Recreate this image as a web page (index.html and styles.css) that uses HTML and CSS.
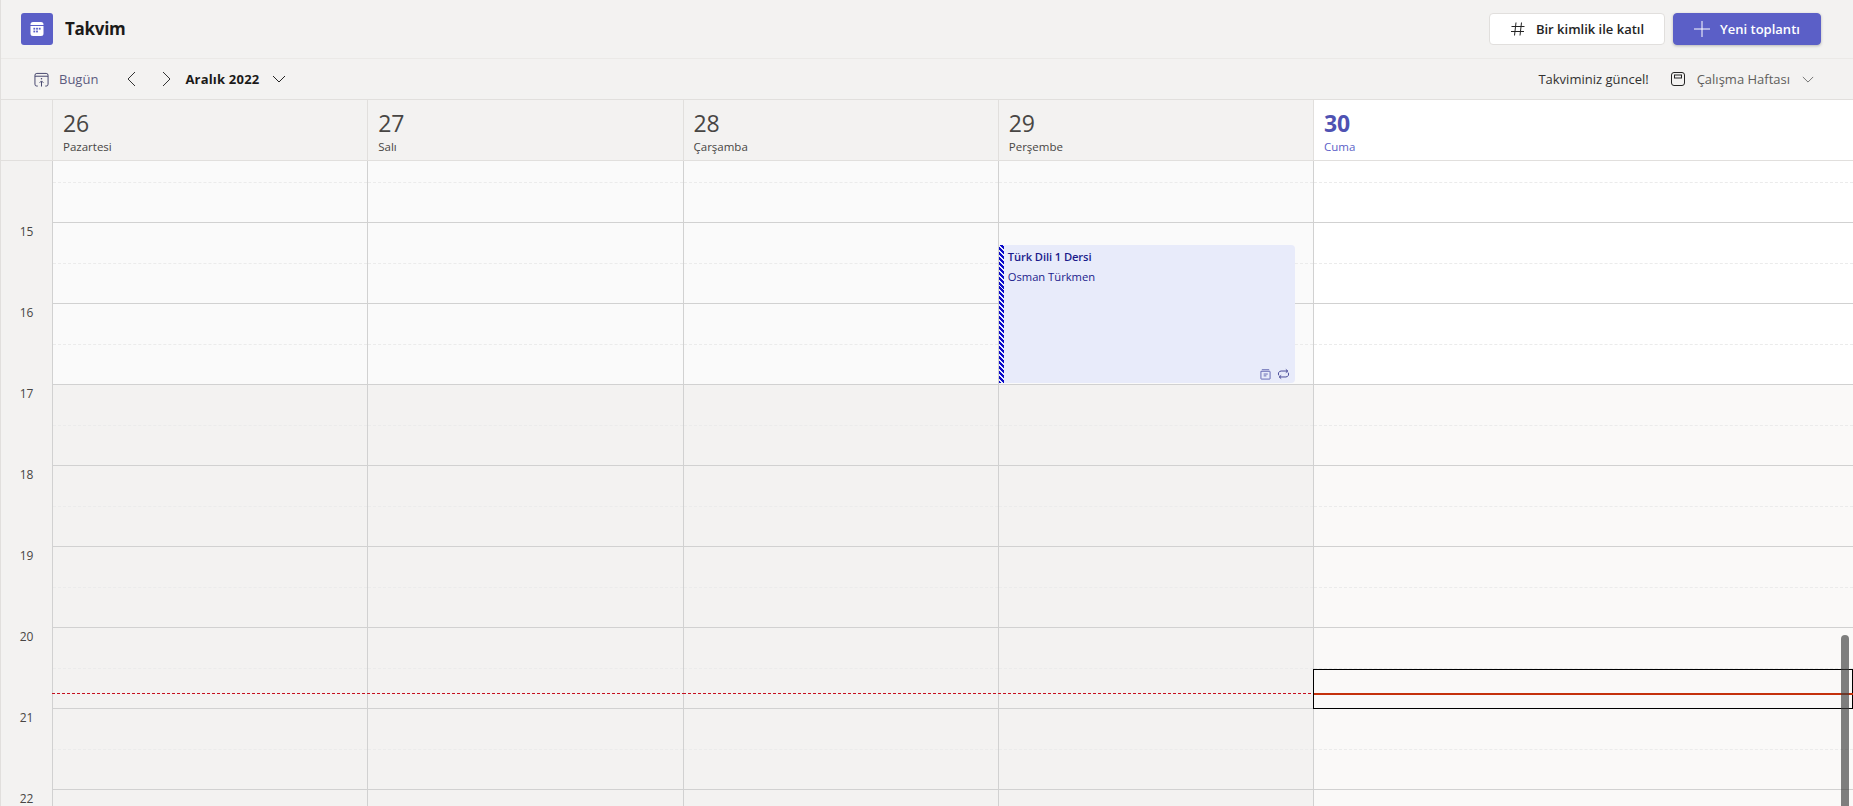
FILE: index.html
```html
<!DOCTYPE html>
<html lang="tr">
<head>
<meta charset="utf-8">
<title>Takvim</title>
<link rel="stylesheet" href="styles.css">
</head>
<body>
<div class="app">
  <header class="topbar">
    <div class="brand">
      <span class="logo">
        <svg viewBox="0 0 16 16" width="16" height="16"><path fill="#fff" d="M1.5 3.5A2.5 2.5 0 0 1 4 1h8a2.5 2.5 0 0 1 2.5 2.5V4h-13zM1.5 5h13v7.5A2.5 2.5 0 0 1 12 15H4a2.5 2.5 0 0 1-2.5-2.5z"/><g fill="#5b5fc7"><rect x="4.4" y="6.8" width="1.8" height="1.8"/><rect x="7.1" y="6.8" width="1.8" height="1.8"/><rect x="9.8" y="6.8" width="1.8" height="1.8"/><rect x="4.4" y="9.6" width="1.8" height="1.8"/><rect x="7.1" y="9.6" width="1.8" height="1.8"/></g></svg>
      </span>
      <h1 class="title">Takvim</h1>
    </div>
    <div class="actions">
      <button class="btn btn-light">
        <svg viewBox="0 0 16 16" width="16" height="16"><path fill="none" stroke="#242424" stroke-width="1" d="M6 1.5 4.5 14.5M11.5 1.5 10 14.5M1.5 5.5h13M1 10.5h13"/></svg>
        <span>Bir kimlik ile katıl</span>
      </button>
      <button class="btn btn-primary">
        <svg viewBox="0 0 16 16" width="16" height="16"><path fill="none" stroke="#fff" stroke-width="1" d="M8 0v16M0 8h16"/></svg>
        <span>Yeni toplantı</span>
      </button>
    </div>
  </header>

  <div class="toolbar">
    <div class="tool-group">
      <span class="today">
        <svg viewBox="0 0 16 16" width="15" height="15"><path fill="none" stroke="#3d3e66" stroke-width="1" d="M4 15H3a2 2 0 0 1-2-2V3.500a2 2 0 0 1 2-2h10a2 2 0 0 1 2 2V13a2 2 0 0 1-2 2h-1M1 4.500h14M8 15.500V10M6 11.500 8 9.500l2 2"/><circle cx="8" cy="7.200" r=".8" fill="#3d3e66"/></svg>
        <span>Bugün</span>
      </span>
      <svg class="nav-prev" viewBox="0 0 10 16" width="10" height="16"><path fill="none" stroke="#333" d="M9 1 2 8l7 7"/></svg>
      <svg class="nav-next" viewBox="0 0 10 16" width="10" height="16"><path fill="none" stroke="#333" d="m1 1 7 7-7 7"/></svg>
      <span class="month">Aralık 2022</span>
      <svg class="month-chev" viewBox="0 0 14 8" width="14" height="8"><path fill="none" stroke="#242424" d="m1 1 6 6 6-6"/></svg>
    </div>
    <div class="tool-group">
      <span class="status">Takviminiz güncel!</span>
      <svg class="view-icon" viewBox="0 0 14 14" width="14" height="14"><rect x=".5" y=".5" width="13" height="13" rx="2.500" fill="none" stroke="#242424"/><rect x="3.500" y="3" width="7" height="3" fill="none" stroke="#242424"/></svg>
      <span class="view-name">Çalışma Haftası</span>
      <svg class="view-chev" viewBox="0 0 14 8" width="12" height="7"><path fill="none" stroke="#616161" d="m1 1 6 6 6-6"/></svg>
    </div>
  </div>

  <div class="days grid">
    <div class="day-head gutter-head"></div>
    <div class="day-head"><div class="num">26</div><div class="name">Pazartesi</div></div>
    <div class="day-head"><div class="num">27</div><div class="name">Salı</div></div>
    <div class="day-head"><div class="num">28</div><div class="name">Çarşamba</div></div>
    <div class="day-head"><div class="num">29</div><div class="name">Perşembe</div></div>
    <div class="day-head current"><div class="num">30</div><div class="name">Cuma</div></div>
  </div>

  <div class="body grid">
    <div class="gutter">
      <div class="label-first"></div>
      <div class="label">15</div><div class="label">16</div><div class="label">17</div><div class="label">18</div>
      <div class="label">19</div><div class="label">20</div><div class="label">21</div><div class="label">22</div>
    </div>

    <div class="col">
      <div class="cell first work"></div><div class="cell work"></div><div class="cell work"></div>
      <div class="cell"></div><div class="cell"></div><div class="cell"></div><div class="cell"></div><div class="cell"></div><div class="cell"></div>
      <div class="now-dash"></div>
    </div>
    <div class="col">
      <div class="cell first work"></div><div class="cell work"></div><div class="cell work"></div>
      <div class="cell"></div><div class="cell"></div><div class="cell"></div><div class="cell"></div><div class="cell"></div><div class="cell"></div>
      <div class="now-dash"></div>
    </div>
    <div class="col">
      <div class="cell first work"></div><div class="cell work"></div><div class="cell work"></div>
      <div class="cell"></div><div class="cell"></div><div class="cell"></div><div class="cell"></div><div class="cell"></div><div class="cell"></div>
      <div class="now-dash"></div>
    </div>
    <div class="col">
      <div class="cell first work"></div><div class="cell work"></div><div class="cell work"></div>
      <div class="cell"></div><div class="cell"></div><div class="cell"></div><div class="cell"></div><div class="cell"></div><div class="cell"></div>
      <div class="now-dash"></div>
      <div class="event">
        <div class="event-title">Türk Dili 1 Dersi</div>
        <div class="event-person">Osman Türkmen</div>
        <div class="event-icons">
          <svg viewBox="0 0 12 12" width="11" height="11"><path fill="none" stroke="#4f52a8" stroke-width=".9" d="M1 2.500h9.500a.5.5 0 0 1 .5.500v7.500a.5.5 0 0 1-.5.5h-9a.5.5 0 0 1-.5-.5zM2 .8h8M4 5.500h4.500M4 7.500h3"/></svg>
          <svg viewBox="0 0 14 12" width="13" height="12"><path fill="none" stroke="#2b2c86" stroke-width=".9" d="M9.500 1l2 1.800-2 1.800M11.500 2.800H4.500a3 3 0 0 0-2.400 4.800M4.500 11l-2-1.800 2-1.800M2.500 9.200h7a3 3 0 0 0 2.400-4.800"/></svg>
        </div>
      </div>
    </div>
    <div class="col last">
      <div class="cell first work"></div><div class="cell work"></div><div class="cell work"></div>
      <div class="cell"></div><div class="cell"></div><div class="cell"></div><div class="cell"></div><div class="cell"></div><div class="cell"></div>
      <div class="focus-box"></div>
      <div class="now-line"></div>
    </div>
    <div class="scroll-thumb"></div>
  </div>
</div>
</body>
</html>
```
FILE: styles.css
```css
* { box-sizing: border-box; }
html, body { height: 100%; margin: 0; overflow: hidden; }
body { font-family: "Open Sans", "Noto Sans", "Liberation Sans", sans-serif; color: #242424; background: #f3f2f1; }

.app { height: 100vh; display: flex; flex-direction: column; border-left: 1px solid #e1dfdd; }

.topbar { height: 59px; flex: none; display: flex; align-items: center; justify-content: space-between; padding: 0 32px 1px 20px; border-bottom: 1px solid #ebe9e7; }
.brand { display: flex; align-items: center; gap: 12px; }
.logo { width: 32px; height: 32px; background: #5b5fc7; border-radius: 3px; display: flex; align-items: center; justify-content: center; }
.title { margin: 0; font-size: 17px; font-weight: 700; letter-spacing: -.3px; color: #1b1a19; }

.actions { display: flex; gap: 8px; }
.btn { height: 32px; display: flex; align-items: center; justify-content: center; gap: 10px; border-radius: 4px; font: 600 13px "Open Sans", "Noto Sans", sans-serif; }
.btn-light { width: 176px; background: #fff; border: 1px solid #e1dfdd; color: #242424; }
.btn-primary { width: 148px; background: #5b5fc7; border: 1px solid #5b5fc7; color: #fff; box-shadow: 0 1px 3px rgba(0,0,0,.25); }

.toolbar { height: 41px; flex: none; display: flex; align-items: center; justify-content: space-between; padding: 0 39px 0 33px; border-bottom: 1px solid #e1dfdd; font-size: 13px; }
.tool-group { display: flex; align-items: center; }
.today { display: flex; align-items: center; gap: 10px; color: #5c5b7e; }
.nav-prev { margin-left: 28px; }
.nav-next { margin-left: 26px; }
.month { margin-left: 13px; font-weight: 700; letter-spacing: .2px; color: #1b1a19; }
.month-chev { margin-left: 13px; }
.status { color: #323130; }
.view-icon { margin-left: 22px; }
.view-name { margin-left: 12px; color: #605e5c; }
.view-chev { margin-left: 12px; }

.grid { display: grid; grid-template-columns: 52px repeat(4, 315.25px) 1fr; }

.days { height: 61px; flex: none; border-bottom: 1px solid #e1dfdd; }
.day-head { border-right: 1px solid #e1dfdd; padding: 9px 0 0 10px; color: #484644; }
.gutter-head { padding: 0; }
.num { font-size: 23px; line-height: 29px; letter-spacing: -.2px; }
.name { margin-top: 2px; font-size: 11.500px; line-height: 14px; }
.day-head.current { background: #fff; border-right: 0; color: #5b5fc7; }
.current .num { font-weight: 700; color: #4f52b2; }

.body { flex: 1; min-height: 0; overflow: hidden; position: relative; }
.gutter { border-right: 1px solid #d1d1d1; font-size: 12px; color: #484644; text-align: center; }
.label-first { height: 62px; }
.label { height: 81px; line-height: 18px; letter-spacing: -.2px; }

.col { position: relative; border-right: 1px solid #d1d1d1; background: #f3f2f1; }
.col.last { border-right: 0; background: #faf9f8; }
.cell { height: 81px; border-bottom: 1px solid #d1d1d1; }
.cell::before { content: ""; display: block; height: 40px; border-bottom: 1px dashed #ebebeb; }
.cell.first { height: 62px; }
.cell.first::before { height: 21px; }
.cell.work { background: #fafafa; }
.last .cell.work { background: #fff; }

.now-dash { position: absolute; left: -1px; right: -1px; top: 532px; height: 1px; background: repeating-linear-gradient(90deg, #c50f1f 0 3px, transparent 3px 5px); }
.now-line { position: absolute; left: 0; right: 0; top: 532px; height: 2px; background: #c4310c; }
.focus-box { position: absolute; left: -1px; right: 0; top: 508px; height: 40px; border: 1px solid #000; }

.event { position: absolute; left: 0; top: 84px; width: 296px; height: 138px; padding: 2px 0 0 9px; background: #e8ebfa; border-radius: 0 4px 4px 0; color: #1b1b8c; font-size: 11.200px; overflow: hidden; }
.event::before { content: ""; position: absolute; left: 0; top: 0; bottom: 0; width: 5px; background: repeating-linear-gradient(45deg, #0a0ac8 0 2.100px, #e8ebfa 2.100px 3.500px); }
.event-title { font-weight: 600; line-height: 19px; letter-spacing: -.1px; }
.event-person { line-height: 21px; }
.event-icons { position: absolute; right: 5px; bottom: 3px; display: flex; align-items: center; gap: 6px; }

.scroll-thumb { position: absolute; top: 474px; right: 4px; width: 8px; height: 400px; background: rgba(60,60,60,.65); border-radius: 4px; }
```
